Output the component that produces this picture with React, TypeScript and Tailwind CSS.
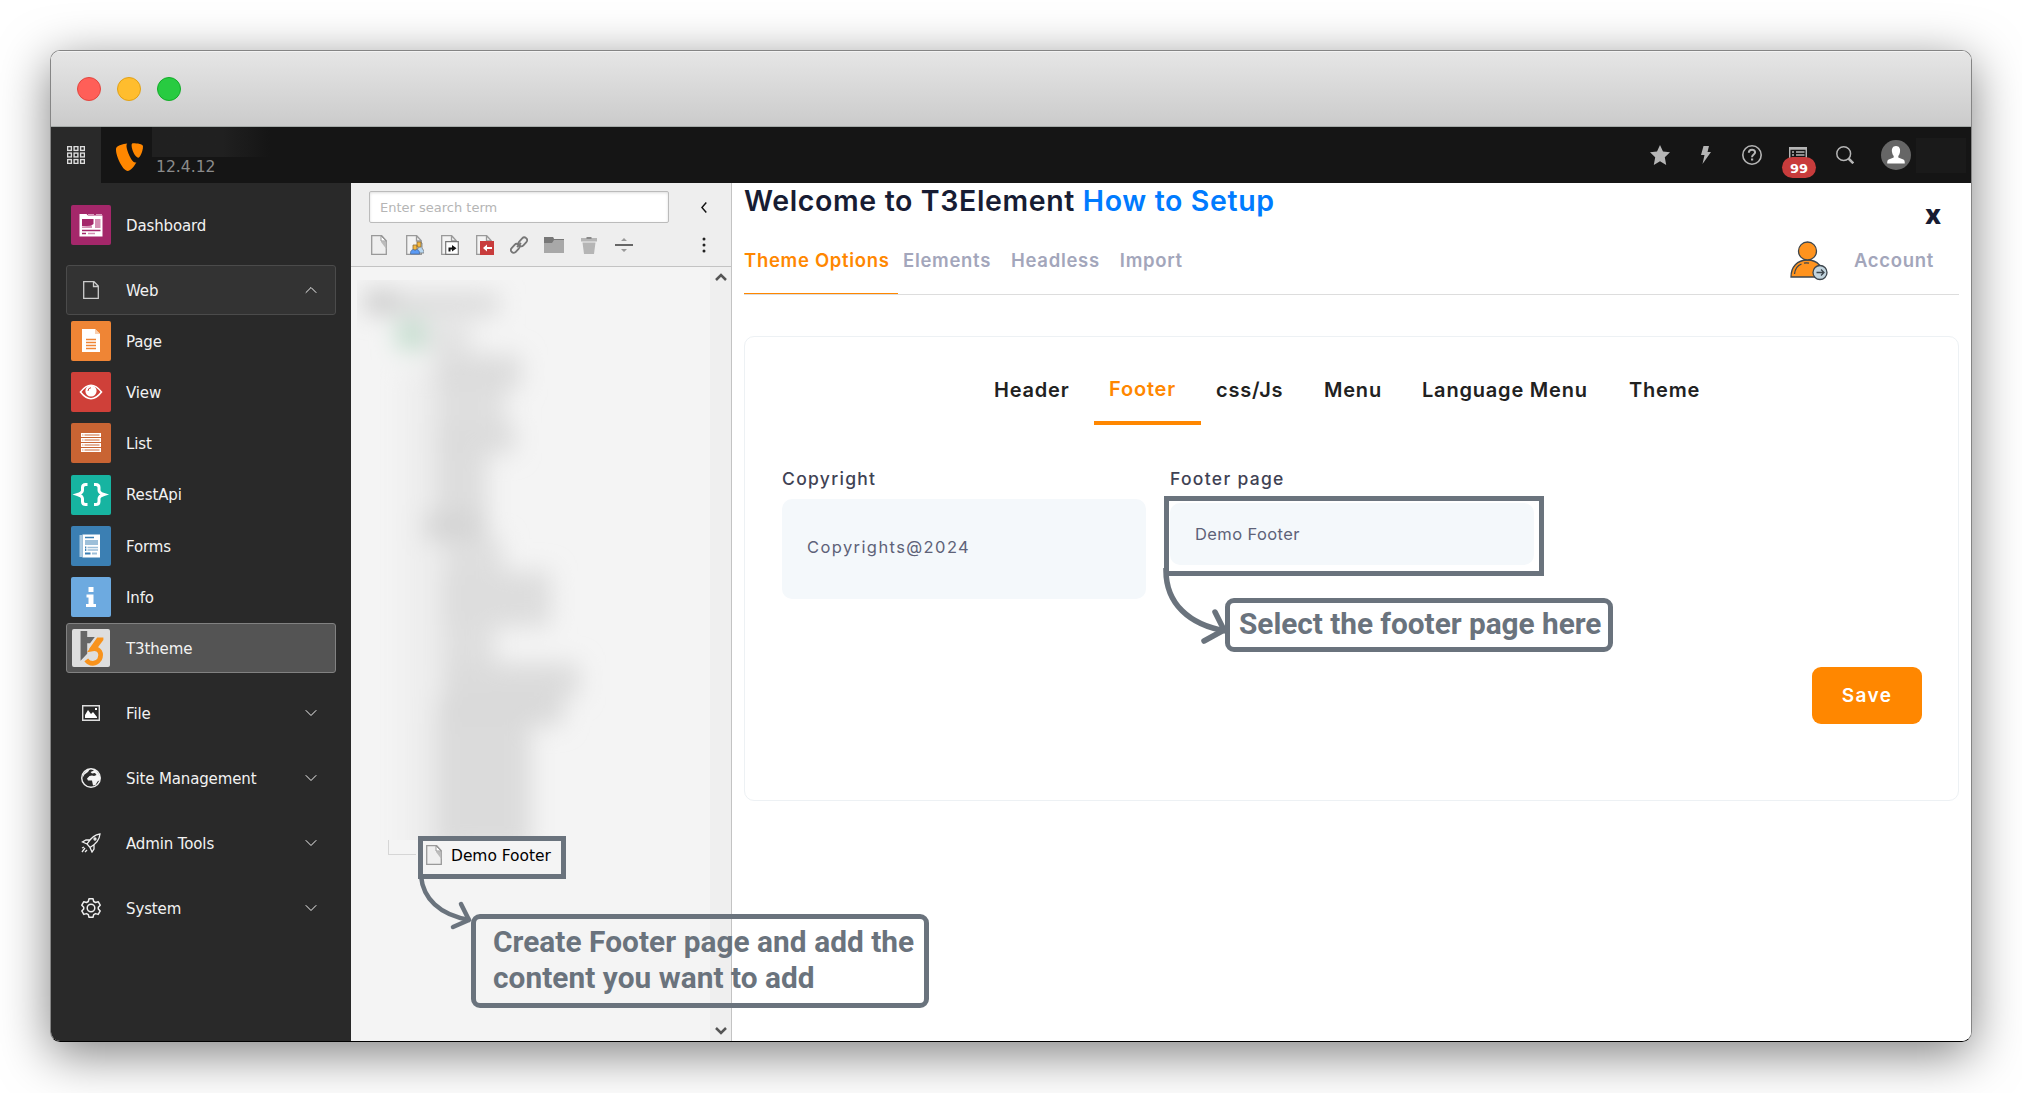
import React from "react";
import { LuChevronDown, LuChevronUp } from "react-icons/lu";

const Doc = ({ className = "" }: { className?: string }) => (
  <svg viewBox="0 0 16 20" className={className} fill="none">
    <path d="M.7.7h10l4.6 5v13.6H.7z" fill="#efefef" stroke="#999" strokeWidth="1.3" />
    <path d="M10 1v5.5h5.3V14L10 7z" fill="#bbb" />
    <path d="M10 1v5h5z" fill="#fff" stroke="#999" strokeWidth="1" />
  </svg>
);

const modules = [
  {
    label: "Page",
    tile: "bg-[#ef8535]",
    icon: (
      <>
        <path d="M11 8h13l5 5v18H11z" fill="#fff" />
        <path d="M24 8v5h5z" fill="#f9cfae" />
        <path d="M15 18.5h10M15 21.5h10M15 24.5h10M15 27.5h10" stroke="#ef8535" strokeWidth="1.3" />
      </>
    ),
  },
  {
    label: "View",
    tile: "bg-[#cf4039]",
    icon: (
      <>
        <path d="M9.5 20Q20 6.5 30.5 20Q20 33.5 9.5 20Z" fill="none" stroke="#fff" strokeWidth="1.6" />
        <circle cx="20" cy="19" r="5.6" fill="#fff" />
        <path d="M17 19q0-3 3-3.3" fill="none" stroke="#cf4039" />
      </>
    ),
  },
  {
    label: "List",
    tile: "bg-[#c96433]",
    icon: (
      <>
        {[10, 15, 20, 25].map((y) => (
          <g key={y}>
            <path d={`M10 ${y}h20v4H10z`} fill="#fff" />
            <path d={`M13.5 ${y + 2}h15`} stroke="#dd9b7b" strokeWidth="1.6" />
            <path d={`M11 ${y + 2}h1.5`} stroke="#dd9b7b" strokeWidth="1.2" />
          </g>
        ))}
      </>
    ),
  },
  {
    label: "RestApi",
    tile: "bg-[#17b4a1]",
    icon: (
      <path
        d="M16.500 9.500h-1.800c-2 0-3.200 1.200-3.200 3v2.800c0 2-1.800 3.200-5 4.200 3.200 1 5 2.200 5 4.200v2.800c0 1.800 1.200 3 3.200 3h1.800M23 9.500h1.800c2 0 3.200 1.200 3.200 3v2.800c0 2 1.800 3.200 5 4.200-3.200 1-5 2.200-5 4.200v2.800c0 1.800-1.200 3-3.200 3H23"
        fill="none"
        stroke="#fff"
        strokeWidth="3"
      />
    ),
  },
  {
    label: "Forms",
    tile: "bg-[#3b7fb3]",
    icon: (
      <>
        <path d="M8.500 9v22h2.500V9z" fill="#a9c9e1" />
        <path d="M11.500 8.500H29V31.500H11.500z" fill="#fff" />
        <path d="M14 11.500h9" stroke="#3b7fb3" strokeWidth="1.500" />
        <path d="M14 14h13v5H14z" fill="#9dbfd9" />
        <path d="M16.500 21.500H27M16.500 24H27" stroke="#9dbfd9" strokeWidth="1.300" />
        <path d="M14 21.500h1.300M14 24h1.300M14 27.500h5.500" stroke="#3b7fb3" strokeWidth="2" />
        <path d="M21 27.500h5" stroke="#9dbfd9" strokeWidth="2" />
      </>
    ),
  },
  {
    label: "Info",
    tile: "bg-[#6daae0]",
    icon: <path d="M17.500 10h5v5h-5zM15.500 17.500h7V27H25v3H15v-3h2.500v-6.500h-2z" fill="#fff" />,
  },
  {
    label: "T3theme",
    tile: "bg-[#dedede] scale-95",
    active: true,
    icon: (
      <>
        <path d="M9 2h7v6.500h8L19 15h-3v11l-7 7.500z" fill="#666" />
        <path d="M26.500 9H33v2.500L26 21h-8z" fill="#f8931d" />
        <path
          d="M29 11l-7.500 10c7.500-1.500 10.500 5 7.500 11-3.500 5.500-10.500 5.500-14 .5"
          fill="none"
          stroke="#f8931d"
          strokeWidth="4.800"
        />
      </>
    ),
  },
];

const groups = [
  {
    label: "File",
    icon: (
      <>
        <path d="M1.700 2.700h16.600v14.600H1.700z" fill="none" stroke="#ddd" strokeWidth="1.400" />
        <path d="M4 15v-3l3-5 3 4 2-2 4 5v1z" fill="#fff" />
        <path d="M14 5h2v2h-2z" fill="#fff" />
      </>
    ),
  },
  {
    label: "Site Management",
    icon: (
      <>
        <circle cx="10" cy="10" r="9.300" fill="none" stroke="#eee" strokeWidth="1.400" />
        <path d="M6 10.500L8.500 8l2.500-.500L13 8l2.500-1-1.500-2-3 .500L9.500 4 13 2.500 10 1l5 1.200 4 5.800v4l-2.500 1.500-2 3.500-2.500.500-1-5H7z" fill="#f4f4f4" />
        <path d="M2 6.500L5.500 2 9 1 7 4 3.500 6.500 1.500 10z" fill="#eee" />
      </>
    ),
  },
  {
    label: "Admin Tools",
    icon: (
      <g fill="none" stroke="#eee" strokeWidth="1.300">
        <path d="M19 1c-5 .5-9 3.500-13 10l3 3.500C15 11 18.500 7 19 1zM9 7H5L1.500 9 6 11M13 12v4l-2 3-2-4.500M1 15l2-1M1 19l3-4M4 19l2-2" />
        <circle cx="14" cy="6" r="1" />
      </g>
    ),
  },
  {
    label: "System",
    icon: (
      <g fill="none" stroke="#eee" strokeWidth="1.500" strokeLinejoin="round">
        <circle cx="10" cy="10" r="3.800" />
        <path d="M8 .8h4l.7 2.700 1.800 1 2.700-.8 2 3.500-1.900 2v1.700l1.900 2-2 3.500-2.700-.8-1.800 1-.7 2.700H8l-.7-2.700-1.800-1-2.700.8-2-3.500 1.900-2V9.200l-1.900-2 2-3.500 2.700.8 1.800-1z" />
      </g>
    ),
  },
];

const Sidebar = () => (
  <aside className="w-[300px] shrink-0 bg-[#292929] px-[15px] pt-[17px] text-[15px] tracking-[-0.13px] text-[#f2f2f2]">
    <div className="flex h-[50px] items-center pl-[5px]">
      <svg viewBox="0 0 40 40" className="size-10 rounded-[2px] bg-[#a4276a]">
        <path d="M8.500 9h7l1.500 1.500h14.500v21h-23z" fill="#fff" />
        <path d="M17 9.500h6M25 9.500h6" stroke="#d9a0bf" />
        <path d="M11 14h11.500v5l-3 2H11z" fill="#a4276a" />
        <path d="M24 14h5.500v9H24zM11 21.500l10-1v2.500H11z" fill="#d48fb3" />
        <path d="M11 25.500h18.500M11 28.500h4" stroke="#a4276a" strokeWidth="1.300" />
        <path d="M17 28.500h7" stroke="#d48fb3" strokeWidth="1.300" />
      </svg>
      <span className="ml-[15px] pt-0.5">Dashboard</span>
    </div>

    <div className="mt-[15px] flex h-[50px] items-center rounded-[3px] border border-[#4b4b4b] bg-[#333] pr-3.5 pl-4">
      <svg viewBox="0 0 16 18" className="h-[18px] w-4" fill="none" stroke="#ccc" strokeWidth="1.300">
        <path d="M.7.7H11l4.300 4.300v12.300H.7zM10.500 1v4.500H15" />
      </svg>
      <span className="ml-[27px] flex-1 pt-0.5">Web</span>
      <LuChevronUp size={20} strokeWidth={1.2} />
    </div>

    <div className="h-[358px] pt-[0.5px]">
      {modules.map((m) => (
        <div key={m.label} className="flex h-[51.2px] items-center">
          <div
            className={`flex h-[50px] w-full items-center rounded-[3px] border pl-1 ${
              m.active ? "border-[#818181] bg-[#545454]" : "border-transparent"
            }`}
          >
            <svg viewBox="0 0 40 40" className={`size-10 rounded-[2px] ${m.tile}`}>
              {m.icon}
            </svg>
            <span className="ml-[15px] pt-0.5">{m.label}</span>
          </div>
        </div>
      ))}
    </div>

    {groups.map((g) => (
      <div key={g.label} className="mt-[15px] flex h-[50px] items-center pr-[15px] pl-[15px]">
        <svg viewBox="0 0 20 20" className="size-5">
          {g.icon}
        </svg>
        <span className="ml-[25px] flex-1 pt-0.5">{g.label}</span>
        <LuChevronDown size={20} strokeWidth={1.2} />
      </div>
    ))}
  </aside>
);

const TopBar = () => (
  <header className="flex h-14 shrink-0 items-center bg-[#151515]">
    <div className="flex h-14 w-[50px] items-center justify-center bg-[#292929]">
      <svg viewBox="0 0 18 18" className="size-[18px]" fill="none" stroke="#ddd" strokeWidth="1.400">
        {[0, 6.5, 13].map((y) =>
          [0, 6.5, 13].map((x) => <rect key={`${x}-${y}`} x={x + 0.6} y={y + 0.6} width="3.800" height="3.800" />)
        )}
      </svg>
    </div>
    <svg viewBox="0 0 28 28" className="mt-[3px] ml-[15px] size-7" fill="#ff8700">
      <path d="M20.400 19.300c-.4.100-.8.200-1.200.2C15.500 19.500 10.500 7 10.500 3c0-1.500.400-2 .8-2.400C6.800 1.200 1.500 2.800.5 4.500 0 5 0 6 0 7c0 6.500 7 21 11.800 21 2.200 0 6-3.600 8.600-8.700" />
      <path d="M17 .3c4.300 0 10 .7 10 3.200 0 5-3.200 11.200-4.800 11.200-2.900 0-6.600-8.100-6.600-12.200C15.600.7 16.300.3 17 .3" />
    </svg>
    <div className="ml-2 flex h-full flex-col">
      <div className="h-[30px] w-[118px] bg-linear-to-r from-[#202020] from-60% to-[#151515]" />
      <span className="pl-1 text-[15.6px] leading-5 text-[#8b8b8b]">12.4.12</span>
    </div>
    <div className="ml-auto flex h-full items-center pr-[5px] text-[#b5b5b5]">
      <svg viewBox="0 0 20 20" className="mr-[31px] size-5" fill="currentColor">
        <path d="M10 0l3 6.500 7 .8-5.200 4.900L16.200 20 10 16.300 3.800 20l1.400-7.800L0 7.300l7-.8z" />
      </svg>
      <svg viewBox="0 0 10 18" className="mr-[31px] h-[18px] w-2.5" fill="currentColor">
        <path d="M2.500 0H8L6.500 6H10L1.500 18 3.500 9H0z" />
      </svg>
      <svg viewBox="0 0 20 20" className="mr-[27px] size-5" fill="none" stroke="currentColor">
        <circle cx="10" cy="10" r="9.200" strokeWidth="1.600" />
        <path d="M6.800 7.700c.2-4 6.300-3.800 6.300-.5 0 2.300-3.100 2.300-3.100 5" strokeWidth="2" />
        <path d="M9 14.500h2.200" strokeWidth="2" />
      </svg>
      <div className="relative mr-[29px] flex h-5 w-[18px]">
        <svg viewBox="0 0 18 16" className="mt-0.5 h-4 w-[18px]" fill="none" stroke="currentColor">
          <path d="M.7.700h16.600v14H.7zM.7 2h16.600M3 5h2M7 5h8.500M3 8h2M7 8h8.500" strokeWidth="1.500" />
        </svg>
        <span className="absolute top-3 -left-[7px] flex h-[21px] w-[34px] items-center justify-center rounded-full bg-[#c83c3c] pt-0.5 text-[13px] font-bold text-white">
          99
        </span>
      </div>
      <svg viewBox="0 0 18 18" className="mr-[27px] size-[18px]" fill="none" stroke="currentColor">
        <circle cx="7.700" cy="7.700" r="6.900" strokeWidth="1.500" />
        <path d="M12.500 12.500l4.800 4.800" strokeWidth="2.500" />
      </svg>
      <svg viewBox="0 0 30 30" className="size-[30px]">
        <circle cx="15" cy="15" r="15" fill="#666" />
        <path d="M15 6c3.500 0 4.500 3 4 6-.3 2-1 3-1.700 4v1.500l5 2c1.200.5 1.500 1.500 1.500 4H6.200c0-2.500.3-3.500 1.500-4l5-2V16c-.7-1-1.400-2-1.700-4-.5-3 .5-6 4-6z" fill="#fff" />
      </svg>
      <div className="ml-[5px] h-[35px] w-[50px] bg-[#1a1a1a]" />
    </div>
  </header>
);

// Redacted tree rows: x, y, width, height relative to the tree list.
const smudges = [
  [14, 24, 30, 22, "#c8c8c8"],
  [44, 26, 104, 22, "#dadada"],
  [46, 54, 28, 28, "#bfdccb"],
  [76, 56, 44, 30, "#e2e2e2"],
  [84, 88, 86, 34, "#dcdcdc"],
  [84, 122, 70, 34, "#dfdfdf"],
  [84, 156, 80, 30, "#dcdcdc"],
  [84, 186, 52, 62, "#dddddd"],
  [74, 246, 62, 28, "#d4d4d4"],
  [92, 272, 60, 34, "#dfdfdf"],
  [90, 304, 110, 56, "#dddddd"],
  [90, 358, 54, 40, "#dfdfdf"],
  [92, 396, 136, 34, "#dbdbdb"],
  [86, 430, 126, 28, "#d9d9d9"],
  [84, 456, 96, 130, "#dbdbdb"],
] as const;

const PageTree = () => (
  <section className="flex w-[381px] shrink-0 flex-col border-r border-[#c3c3c3] bg-[#f4f4f4]">
    <div className="h-[84px] border-b border-[#c3c3c3] bg-[#eee] pt-2 pr-5 pl-[18px]">
      <div className="flex items-center">
        <div className="flex h-8 w-[300px] items-center rounded-[2px] border border-[#bbb] bg-white pl-2.5 text-[13px] text-[#b5b5b5] shadow-[inset_0_1px_3px_#ddd]">
          <span className="pt-px">Enter search term</span>
        </div>
        <svg viewBox="0 0 6 11" className="ml-8 h-[11px] w-1.5" fill="none" stroke="#111" strokeWidth="1.500">
          <path d="M5.300.5L.9 5.500l4.400 5" />
        </svg>
      </div>
      <div className="mt-3 flex h-5 items-center pl-0.5">
        <Doc className="h-5 w-4" />
        <svg viewBox="0 0 18 20" className="ml-[19px] h-5 w-[18px]">
          <path d="M.7.700h10l4.600 5v13.600H.7zM10.500 1v5h5" fill="#f3f3f3" stroke="#999" strokeWidth="1.300" />
          <path d="M10 18v-3l3-2.500V8h3v5l2 3v2z" fill="#b7d6f0" stroke="#777" strokeWidth=".8" />
          <path d="M11 7h4v5h-4zM7 10h4v5H7z" fill="#f5b83f" stroke="#8a6d3a" strokeWidth=".8" />
          <path d="M4.500 19c0-3.500 1-4 3-4.500l1.500 1 1.500-1c2 .5 3 1 3 4.500z" fill="#5a9af5" stroke="#4c6d9f" strokeWidth=".8" />
        </svg>
        <svg viewBox="0 0 18 20" className="ml-[17px] h-5 w-[18px]">
          <path d="M.7.700h10l4.600 5v13.600H.7zM10.500 1v5h5" fill="#f3f3f3" stroke="#999" strokeWidth="1.300" />
          <path d="M4.700 6.700h12.600v12.600H4.700z" fill="#fff" stroke="#777" strokeWidth="1.200" />
          <path d="M7.500 16.500v-4H11V10l4.500 3.300L11 16.500v-2H9.500v2z" fill="#111" />
        </svg>
        <svg viewBox="0 0 18 20" className="ml-[17px] h-5 w-[18px]">
          <path d="M.7.700h10l4.600 5v13.600H.7zM10.500 1v5h5" fill="#f3f3f3" stroke="#999" strokeWidth="1.300" />
          <path d="M4 6h14v14H4z" fill="#c83c3c" />
          <path d="M7 13l4-3.500V12h5v2h-5v2.500z" fill="#fff" />
        </svg>
        <svg viewBox="0 0 18 18" className="ml-4 size-[18px]" fill="none" stroke="#777" strokeWidth="1.800">
          <rect x="7.800" y="3" width="10" height="5.600" rx="2.800" transform="rotate(-48 12.800 5.800)" />
          <rect x=".2" y="9.500" width="10" height="5.600" rx="2.800" transform="rotate(-48 5.200 12.300)" />
          <path d="M7 11l4-4" />
        </svg>
        <svg viewBox="0 0 20 16" className="ml-4 h-4 w-5">
          <path d="M0 0h9l1 2h10v14H0z" fill="#a8a8a8" />
          <path d="M0 0h9l1 2h10v1H10L8 6H0z" fill="#777" />
        </svg>
        <svg viewBox="0 0 16 17" className="ml-[17px] h-[17px] w-4" fill="#b5b5b5">
          <path d="M0 1h16v3.500H0zM1.500 5.500h13L13 17H3z" />
          <path d="M5.500 0h5v2h-5z" fill="#888" />
        </svg>
        <svg viewBox="0 0 18 14" className="ml-[18px] h-3.5 w-[18px]" fill="#999">
          <path d="M9 0l3 3H6zM9 14l3-3H6z" />
          <path d="M0 6h18v2H0z" fill="#666" />
        </svg>
        <svg viewBox="0 0 4 16" className="mr-[5px] ml-auto h-4 w-1" fill="#222">
          <circle cx="2" cy="2" r="1.500" />
          <circle cx="2" cy="8" r="1.500" />
          <circle cx="2" cy="14" r="1.500" />
        </svg>
      </div>
    </div>
    <div className="flex flex-1 justify-between">
      <div className="relative flex-1 overflow-hidden">
        <div className="absolute top-[13px] left-1.5 h-[560px] w-[300px] overflow-hidden">
          <svg viewBox="6 13 300 560" className="h-[560px] w-[300px]">
            <defs>
              <filter id="soft" x="-20%" y="-20%" width="140%" height="140%">
                <feGaussianBlur stdDeviation="12 12" />
              </filter>
            </defs>
            <g filter="url(#soft)">
              <path d="M50 100h50v500H50z" fill="#eee" />
              {smudges.map(([x, y, w, h, fill]) => (
                <rect key={`${x}-${y}`} x={x} y={y} width={w} height={h} fill={fill} />
              ))}
            </g>
          </svg>
        </div>
        <div className="mt-[576px] ml-[37px] flex h-6 items-center">
          <div className="-mt-4 h-[15px] w-7 border-b border-l border-[#d6d6d6]" />
          <Doc className="ml-2.5 h-5 w-4" />
          <span className="ml-[9px] pt-1 text-[15.5px] tracking-[-0.05px] text-black">Demo Footer</span>
        </div>
      </div>
      <div className="flex w-[21px] flex-col items-center justify-between bg-[#efefef] py-1.5 text-[#555]">
        <svg viewBox="0 0 12 8" className="h-2 w-3" fill="none" stroke="currentColor" strokeWidth="2.500">
          <path d="M1 7l5-5 5 5" />
        </svg>
        <svg viewBox="0 0 12 8" className="h-2 w-3" fill="none" stroke="currentColor" strokeWidth="2.500">
          <path d="M1 1l5 5 5-5" />
        </svg>
      </div>
    </div>
  </section>
);

const Account = () => (
  <svg viewBox="0 0 38 40" className="h-10 w-[38px]" fill="#ff931e" stroke="#3d464d" strokeWidth="1.300">
    <path d="M1 36c0-10 6-17 16.500-17S33 26 33 36z" />
    <circle cx="17.500" cy="10" r="9" />
    <path d="M4.500 33c.5-5 3-8.500 7-10M14 22.200q2-.7 5 0" fill="none" />
    <circle cx="30" cy="31.500" r="7" fill="#c2d4de" />
    <path d="M26.500 31.500h7M31 28.500l3 3-3 3" fill="none" />
  </svg>
);

const tabs = [
  { label: "Header", box: "w-[76px]" },
  { label: "Footer", box: "ml-6 w-[107px]", active: true },
  { label: "css/Js", box: "ml-[15px] w-[67px]" },
  { label: "Menu", box: "ml-[41px] w-[58px]" },
  { label: "Language Menu", box: "ml-10 w-[166px]" },
  { label: "Theme", box: "ml-[41px] w-[71px]" },
];

const ThemePanel = () => (
  <main className="flex-1 bg-white pr-3 pl-3 font-[Inter,sans-serif]">
    <div className="flex h-[112px] justify-between border-b border-[#ddd]">
      <div className="flex flex-col justify-between">
        <h1 className="pt-px text-[28.5px] leading-[34px] font-semibold tracking-[0.63px] text-[#171c33]">
          Welcome to T3Element <span className="text-[#007bff]">How to Setup</span>
        </h1>
        <nav className="flex text-[18.5px] font-semibold tracking-[0.7px] text-[#a3a6bb]">
          <span className="h-[47px] w-[154px] border-b border-[#ff8700] whitespace-nowrap text-[#ff8700]">
            Theme Options
          </span>
          <span className="ml-[5px]">Elements</span>
          <span className="ml-5">Headless</span>
          <span className="ml-5">Import</span>
        </nav>
      </div>
      <div className="flex flex-col items-end">
        <span className="mt-[15px] mr-[18px] font-['Noto_Sans',sans-serif] text-[26px] leading-8 font-extrabold text-[#171c33]">
          x
        </span>
        <div className="mt-[11px] flex items-center gap-[26px] pr-[25px] text-[18.5px] font-semibold tracking-[0.7px] text-[#a3a6bb]">
          <Account />
          <span>Account</span>
        </div>
      </div>
    </div>

    <div className="mt-[41px] h-[465px] rounded-[10px] border border-[#edf1f4] pr-9 pl-[37px]">
      <div className="ml-[212px] flex pt-[38px] text-[20px] font-semibold tracking-[0.8px] text-[#212121]">
        {tabs.map((t) => (
          <span
            key={t.label}
            className={`flex h-[50px] whitespace-nowrap ${t.box} ${
              t.active ? "-mt-px h-[51px] justify-center border-b-4 border-[#ff8700] pr-2.5 text-[#ff8700]" : ""
            }`}
          >
            {t.label}
          </span>
        ))}
      </div>
      <div className="mt-[42px] flex gap-6">
        <div className="w-[364px]">
          <label className="block h-8 text-[17.5px] leading-6 font-medium tracking-[1.3px] text-[#3f4254]">
            Copyright
          </label>
          <div className="flex h-[100px] items-center rounded-[10px] bg-[#f4f8fb] pb-1 pl-[25px] text-[16.5px] tracking-[1.4px] text-[#5e6278]">
            Copyrights@2024
          </div>
        </div>
        <div className="w-[364px]">
          <label className="block h-9 text-[17.5px] leading-6 font-medium tracking-[1.3px] text-[#3f4254]">
            Footer page
          </label>
          <div className="flex h-[62px] items-center rounded-[10px] bg-[#f4f8fb] pl-[25px] text-[16.5px] tracking-[0.4px] text-[#5e6278]">
            Demo Footer
          </div>
        </div>
      </div>
      <div className="mt-[68px] flex justify-end">
        <button className="h-[57px] w-[110px] rounded-[9px] bg-[#ff8700] pt-0.5 text-[19px] font-semibold tracking-[1.4px] text-white">
          Save
        </button>
      </div>
    </div>
  </main>
);

const Callouts = () => (
  <div className="pointer-events-none absolute inset-0 font-[Roboto,sans-serif] text-[29.8px] leading-9 font-bold text-[#6a737d]">
    <div className="absolute top-[836px] left-[418px] h-[43px] w-[148px] border-[5px] border-[#6a737d]" />
    <svg viewBox="0 0 56 54" className="absolute top-[876px] left-[418px] h-[54px] w-14" fill="none" stroke="#6a737d" strokeWidth="4.500">
      <path d="M3 0c2 22 18 39 49 44" />
      <path d="M43 28l8 16-16 7" strokeLinecap="round" strokeLinejoin="round" />
    </svg>
    <div className="absolute top-[914px] left-[471px] h-[94px] w-[458px] rounded-[9px] border-[5px] border-[#6a737d] pt-[5px] pl-[17px] tracking-[0.05px] whitespace-nowrap">
      Create Footer page and add the
      <br />
      content you want to add
    </div>
    <div className="absolute top-[496px] left-[1164px] h-20 w-[380px] border-[5px] border-[#6a737d]" />
    <svg viewBox="0 0 66 78" className="absolute top-[568px] left-[1162px] h-[78px] w-[66px]" fill="none" stroke="#6a737d" strokeWidth="5.500">
      <path d="M4 0c-1 36 24 57 60 63" />
      <path d="M53 44l9 18-20 11" strokeLinecap="round" strokeLinejoin="round" />
    </svg>
    <div className="absolute top-[598px] left-[1225px] h-[54px] w-[388px] rounded-[9px] border-[5px] border-[#6a737d] pt-[3px] pl-[9px] tracking-[-0.03px] whitespace-nowrap">
      Select the footer page here
    </div>
  </div>
);

const App = () => (
  <div className="relative h-[1093px] w-[2022px] overflow-hidden bg-white p-[50px] font-['DejaVu_Sans',sans-serif]">
    <div className="flex h-[992px] w-[1922px] flex-col overflow-hidden rounded-[10px] border border-[#858585] border-b-black shadow-[0_12px_50px_rgba(0,0,0,0.5)]">
      <div className="flex h-[76px] shrink-0 items-center gap-4 border-b border-[#a5aaa8] bg-linear-to-b from-[#e6e6e6] to-[#cbcbcb] pl-[26px] shadow-[inset_0_1px_0_#f3f3f3]">
        <span className="size-6 rounded-full border border-[#e2463f] bg-[#ff5f58]" />
        <span className="size-6 rounded-full border border-[#e1a116] bg-[#ffbd2e]" />
        <span className="size-6 rounded-full border border-[#12ac28] bg-[#28cb41]" />
      </div>
      <TopBar />
      <div className="flex min-h-0 flex-1">
        <Sidebar />
        <PageTree />
        <ThemePanel />
      </div>
    </div>
    <Callouts />
  </div>
);

export default App;
